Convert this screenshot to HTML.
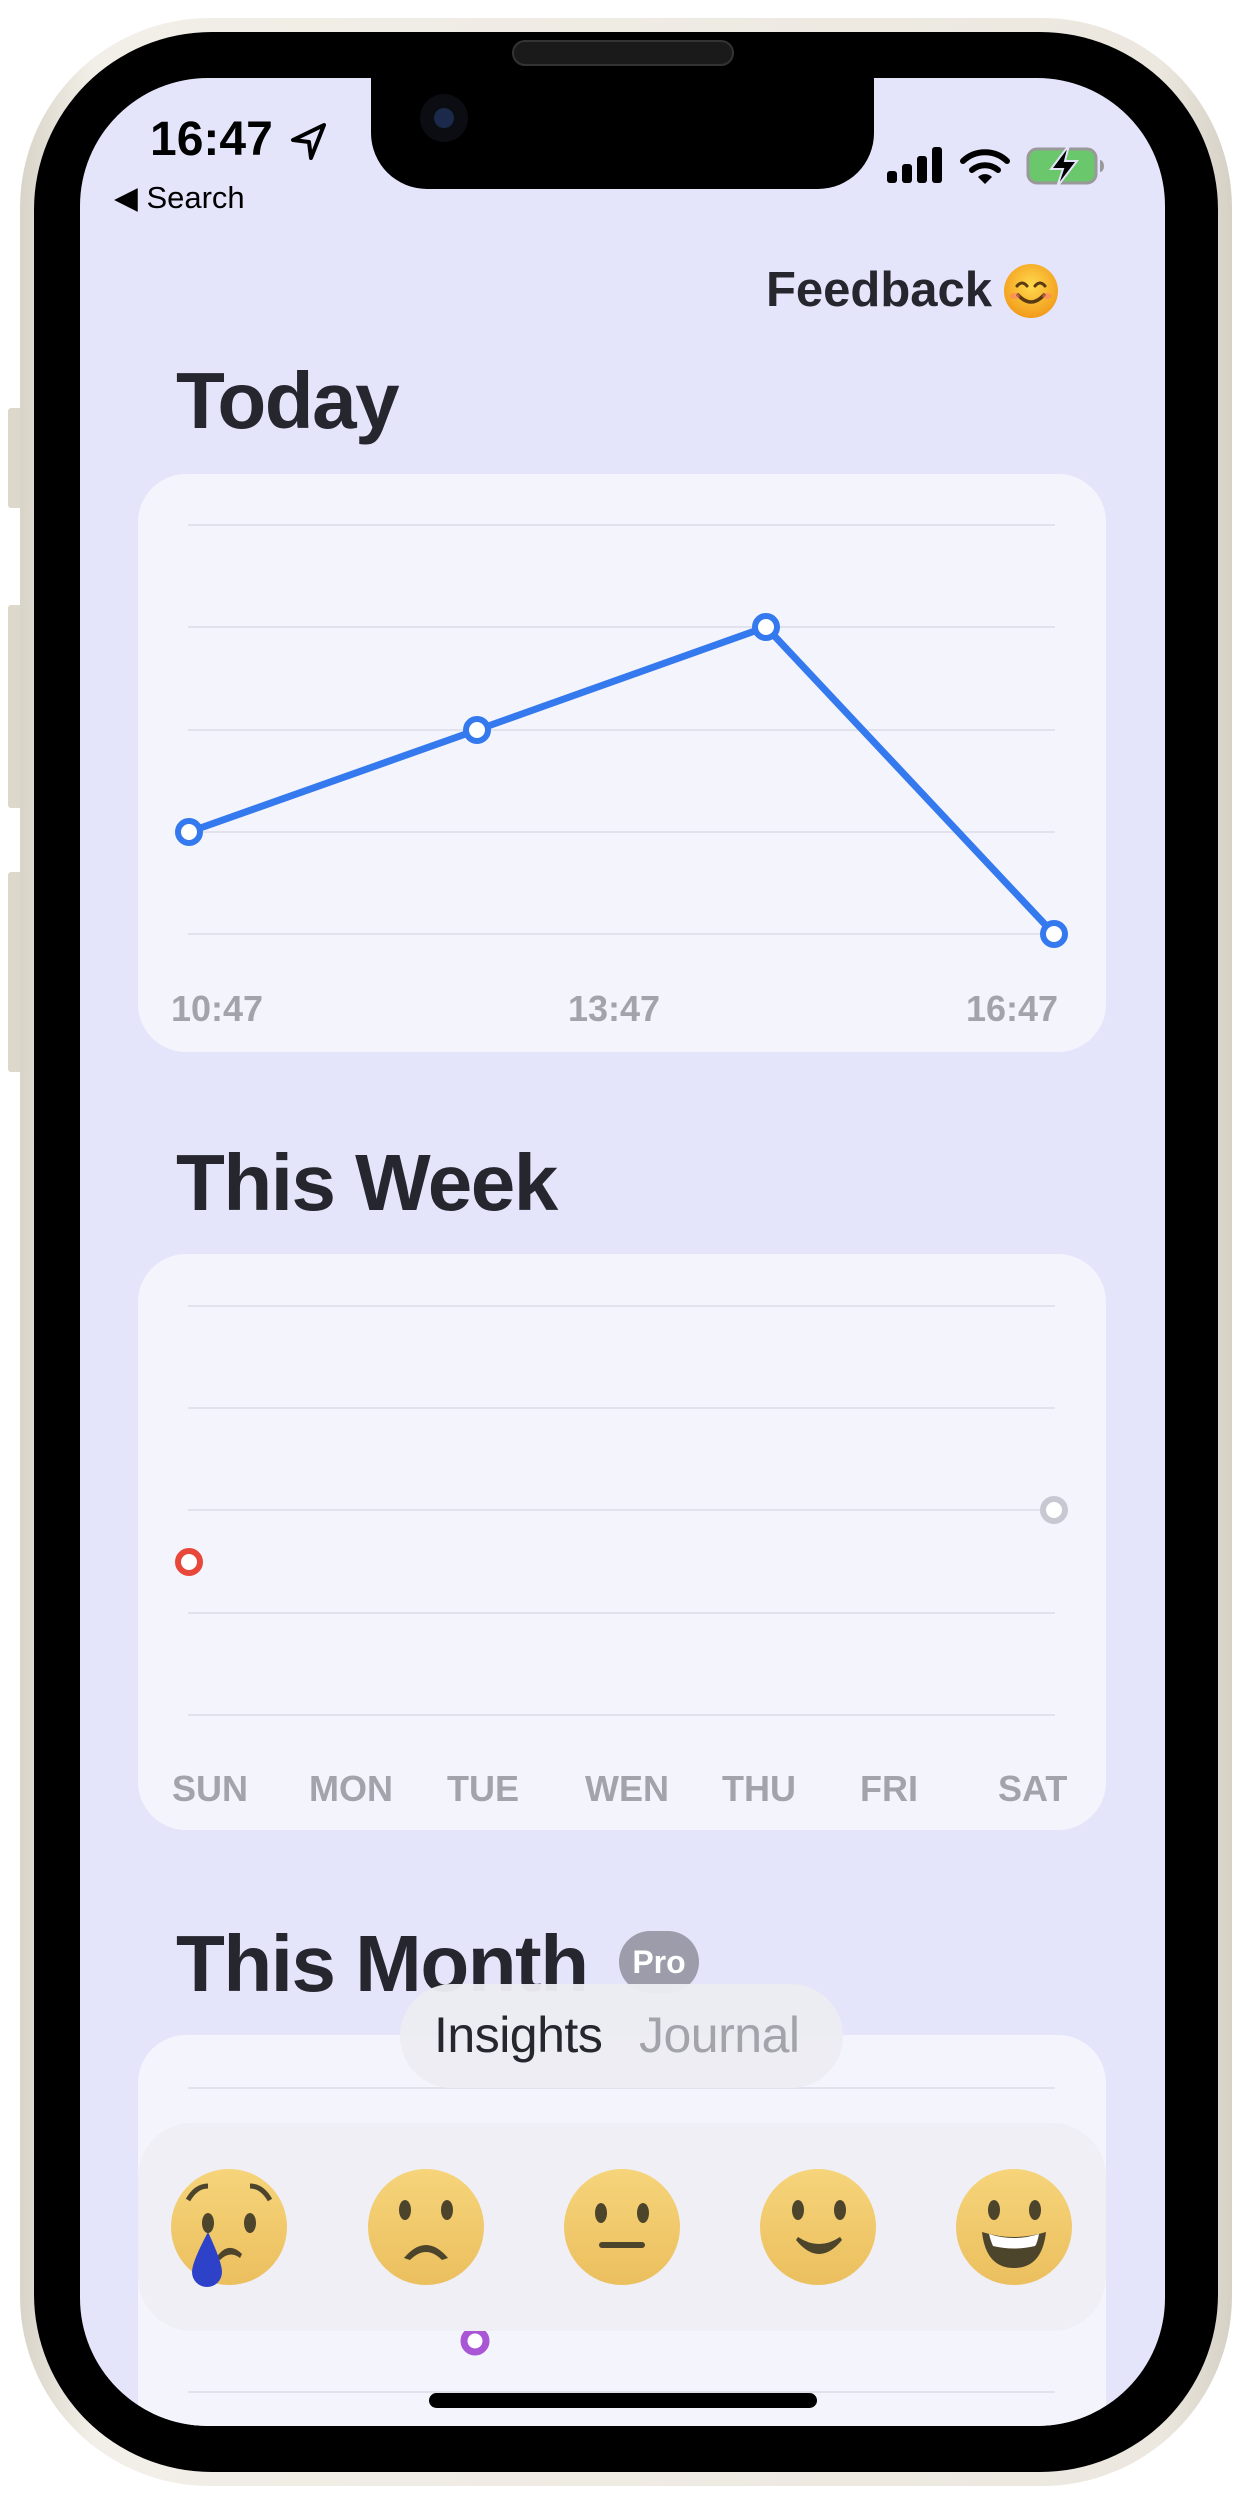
<!DOCTYPE html>
<html><head><meta charset="utf-8"><style>
*{margin:0;padding:0;box-sizing:border-box}
html,body{width:1240px;height:2500px;overflow:hidden}
body{background:#fff;position:relative;font-family:"Liberation Sans",sans-serif}
.a{position:absolute}
.t{font-weight:bold;color:#25262e;white-space:nowrap}
.lbl{position:absolute;font-weight:bold;color:#a3a3ab;font-size:36px;white-space:nowrap}
</style></head><body>
<div class="a" style="left:8px;top:408px;width:14px;height:100px;background:#ddd8cc;border-radius:3px"></div>
<div class="a" style="left:8px;top:605px;width:14px;height:203px;background:#ddd8cc;border-radius:3px"></div>
<div class="a" style="left:8px;top:872px;width:14px;height:200px;background:#ddd8cc;border-radius:3px"></div>
<div class="a" style="left:1218px;top:677px;width:14px;height:326px;background:#ddd8cc;border-radius:3px"></div>
<div class="a" style="left:20px;top:18px;width:1212px;height:2468px;border-radius:190px;background:linear-gradient(90deg,#d9d4c8,#f2efe8 6%,#ece8e0 94%,#d6d1c5);"></div>
<div class="a" style="left:34px;top:32px;width:1184px;height:2440px;border-radius:178px;background:#000"></div>
<div class="a" style="left:80px;top:78px;width:1085px;height:2348px;border-radius:128px;background:#e4e4fb;overflow:hidden">
  <div class="a" style="left:58px;top:396px;width:968px;height:578px;border-radius:48px;background:#f4f4fd"></div>
  <div class="a" style="left:58px;top:1176px;width:968px;height:576px;border-radius:48px;background:#f4f4fd"></div>
  <div class="a" style="left:58px;top:1957px;width:968px;height:600px;border-radius:48px;background:#f4f4fd"></div>
</div>
<div class="a" style="left:371px;top:70px;width:503px;height:119px;background:#000;border-radius:0 0 56px 56px"></div>
<div class="a" style="left:512px;top:40px;width:222px;height:26px;background:#1a1a1a;border-radius:13px;border:2px solid #333"></div>
<div class="a" style="left:420px;top:94px;width:48px;height:48px;border-radius:50%;background:#0b0d12"></div>
<div class="a" style="left:434px;top:108px;width:20px;height:20px;border-radius:50%;background:#1b2a4a"></div>

<div class="a t" style="left:150px;top:112px;font-size:48px;color:#000">16:47</div>
<svg class="a" style="left:288px;top:120px" width="42" height="42" viewBox="0 0 42 42"><path d="M36 5 L5 20 L21 22 L23 38 Z" fill="none" stroke="#000" stroke-width="4" stroke-linejoin="round"/></svg>
<div class="a" style="left:114px;top:180px;font-size:31px;color:#000;white-space:nowrap">◀ Search</div>
<svg class="a" style="left:885px;top:145px" width="230" height="42" viewBox="0 0 230 42">
<rect x="2" y="26" width="10" height="12" rx="3"/><rect x="17" y="19" width="10" height="19" rx="3"/><rect x="32" y="11" width="10" height="27" rx="3"/><rect x="47" y="2" width="10" height="36" rx="3"/>
<path d="M78 16 A32 32 0 0 1 122 16" fill="none" stroke="#000" stroke-width="6" stroke-linecap="round"/>
<path d="M87 25 A20 20 0 0 1 113 25" fill="none" stroke="#000" stroke-width="6" stroke-linecap="round"/>
<path d="M93 32 L100 39 L107 32 A10 10 0 0 0 93 32Z"/>
<rect x="143" y="4" width="68" height="34" rx="9" fill="#6bc76b" stroke="#999" stroke-width="3"/>
<path d="M215 15 v12 a4 6 0 0 0 0 -12z" fill="#999"/>
<path d="M184 0 L166 24 L178 24 L172 42 L192 16 L180 16 Z" fill="#000" stroke="#e4e4fb" stroke-width="2"/>
</svg>

<div class="a t" style="left:766px;top:262px;font-size:49px">Feedback</div>
<svg class="a" style="left:1002px;top:262px" width="58" height="58" viewBox="0 0 58 58"><defs><radialGradient id="fg" cx="50%" cy="40%" r="60%"><stop offset="0" stop-color="#ffd94d"/><stop offset="1" stop-color="#f29b1a"/></radialGradient></defs><circle cx="29" cy="29" r="27" fill="url(#fg)"/><path d="M15 24 q5 -6 10 0 M33 24 q5 -6 10 0" stroke="#5a3a10" stroke-width="3" fill="none" stroke-linecap="round"/><path d="M16 33 q13 14 26 0" stroke="#5a3a10" stroke-width="3.5" fill="none" stroke-linecap="round"/><ellipse cx="13" cy="34" rx="5" ry="3" fill="#f77" opacity=".5"/><ellipse cx="45" cy="34" rx="5" ry="3" fill="#f77" opacity=".5"/></svg>

<div class="a t" style="left:176px;top:355px;font-size:80px;letter-spacing:-1.5px">Today</div>
<div class="a t" style="left:176px;top:1137px;font-size:80px;letter-spacing:-1.5px">This Week</div>
<div class="a t" style="left:176px;top:1918px;font-size:80px;letter-spacing:-1.5px">This Month</div>
<div class="a" style="left:619px;top:1931px;width:80px;height:62px;border-radius:31px;background:#9c9cab;color:#fff;font-weight:bold;font-size:32px;text-align:center;line-height:62px">Pro</div>

<svg class="a" style="left:0;top:0" width="1240" height="2500">
<g stroke="#e2e2ec" stroke-width="2">
<line x1="188" y1="525" x2="1055" y2="525"/><line x1="188" y1="627" x2="1055" y2="627"/><line x1="188" y1="730" x2="1055" y2="730"/><line x1="188" y1="832" x2="1055" y2="832"/><line x1="188" y1="934" x2="1055" y2="934"/>
<line x1="188" y1="1306" x2="1055" y2="1306"/><line x1="188" y1="1408" x2="1055" y2="1408"/><line x1="188" y1="1510" x2="1055" y2="1510"/><line x1="188" y1="1613" x2="1055" y2="1613"/><line x1="188" y1="1715" x2="1055" y2="1715"/>
<line x1="188" y1="2088" x2="1055" y2="2088"/><line x1="188" y1="2392" x2="1055" y2="2392"/>
</g>
<polyline points="189,832 477,730 766,627 1054,934" fill="none" stroke="#3479ee" stroke-width="7" stroke-linejoin="round"/>
<g fill="#fff" stroke="#3479ee" stroke-width="6"><circle cx="189" cy="832" r="11"/><circle cx="477" cy="730" r="11"/><circle cx="766" cy="627" r="11"/><circle cx="1054" cy="934" r="11"/></g>
<circle cx="189" cy="1562" r="11" fill="#fff" stroke="#e8483a" stroke-width="6"/>
<circle cx="1054" cy="1510" r="11" fill="#fff" stroke="#c8c8d2" stroke-width="6"/>
<circle cx="475" cy="2341" r="11" fill="#fff" stroke="#a855d6" stroke-width="7"/>
</svg>
<div class="lbl" style="left:171px;top:988px">10:47</div>
<div class="lbl" style="left:568px;top:988px">13:47</div>
<div class="lbl" style="left:966px;top:988px">16:47</div>
<div class="lbl" style="left:172px;top:1768px">SUN</div>
<div class="lbl" style="left:309px;top:1768px">MON</div>
<div class="lbl" style="left:447px;top:1768px">TUE</div>
<div class="lbl" style="left:585px;top:1768px">WEN</div>
<div class="lbl" style="left:722px;top:1768px">THU</div>
<div class="lbl" style="left:860px;top:1768px">FRI</div>
<div class="lbl" style="left:998px;top:1768px">SAT</div>

<div class="a" style="left:400px;top:1984px;width:443px;height:104px;border-radius:52px;background:rgba(236,236,242,.96)"></div>
<div class="a" style="left:434px;top:2006px;font-size:50px;color:#25262e;white-space:nowrap;letter-spacing:-0.5px">Insights</div>
<div class="a" style="left:639px;top:2006px;font-size:50px;color:#a3a3ab;white-space:nowrap;letter-spacing:-0.5px">Journal</div>

<div class="a" style="left:138px;top:2123px;width:968px;height:208px;border-radius:54px;background:#efeff5"></div>
<svg class="a" style="left:0;top:2160px" width="1240" height="140" viewBox="0 2160 1240 140">
<defs><linearGradient id="eg" x1="0" y1="0" x2="0" y2="1"><stop offset="0" stop-color="#f6d47a"/><stop offset="1" stop-color="#ebbf5e"/></linearGradient></defs>
<g fill="url(#eg)"><circle cx="229" cy="2227" r="58"/><circle cx="426" cy="2227" r="58"/><circle cx="622" cy="2227" r="58"/><circle cx="818" cy="2227" r="58"/><circle cx="1014" cy="2227" r="58"/></g>
<g fill="#4d442c">
<ellipse cx="208" cy="2223" rx="6" ry="10"/><ellipse cx="250" cy="2223" rx="6" ry="10"/>
<path d="M188 2200 q8 -14 20 -14" stroke="#4d442c" stroke-width="5" fill="none"/><path d="M270 2200 q-8 -14 -20 -14" stroke="#4d442c" stroke-width="5" fill="none"/>
<path d="M216 2258 q12 -18 26 -4 l-2 4 q-10 -8 -20 2z"/>
<ellipse cx="405" cy="2210" rx="6" ry="10"/><ellipse cx="447" cy="2210" rx="6" ry="10"/>
<path d="M404 2258 q22 -26 44 0 l-6 2 q-16 -16 -32 0z"/>
<ellipse cx="601" cy="2213" rx="6" ry="10"/><ellipse cx="643" cy="2213" rx="6" ry="10"/>
<rect x="599" y="2242" width="46" height="6" rx="3"/>
<ellipse cx="798" cy="2210" rx="6" ry="10"/><ellipse cx="840" cy="2210" rx="6" ry="10"/>
<path d="M796 2240 q23 28 46 0 l-2 -3 q-21 14 -42 0z"/>
<ellipse cx="994" cy="2210" rx="6" ry="10"/><ellipse cx="1035" cy="2210" rx="6" ry="10"/>
<path d="M982 2232 q32 10 64 0 q-4 36 -32 36 q-28 0 -32 -36z"/>
</g>
<path d="M989 2234 q25 8 50 0 q-2 10 -4 12 q-21 5 -42 0 q-2 -4 -4 -12z" fill="#fff"/>
<path d="M208 2232 q-16 30 -16 40 a15 15 0 0 0 30 0 q0 -10 -14 -40z" fill="#2d42c8"/>
</svg>

<div class="a" style="left:429px;top:2393px;width:388px;height:15px;border-radius:8px;background:#000"></div>
</body></html>
